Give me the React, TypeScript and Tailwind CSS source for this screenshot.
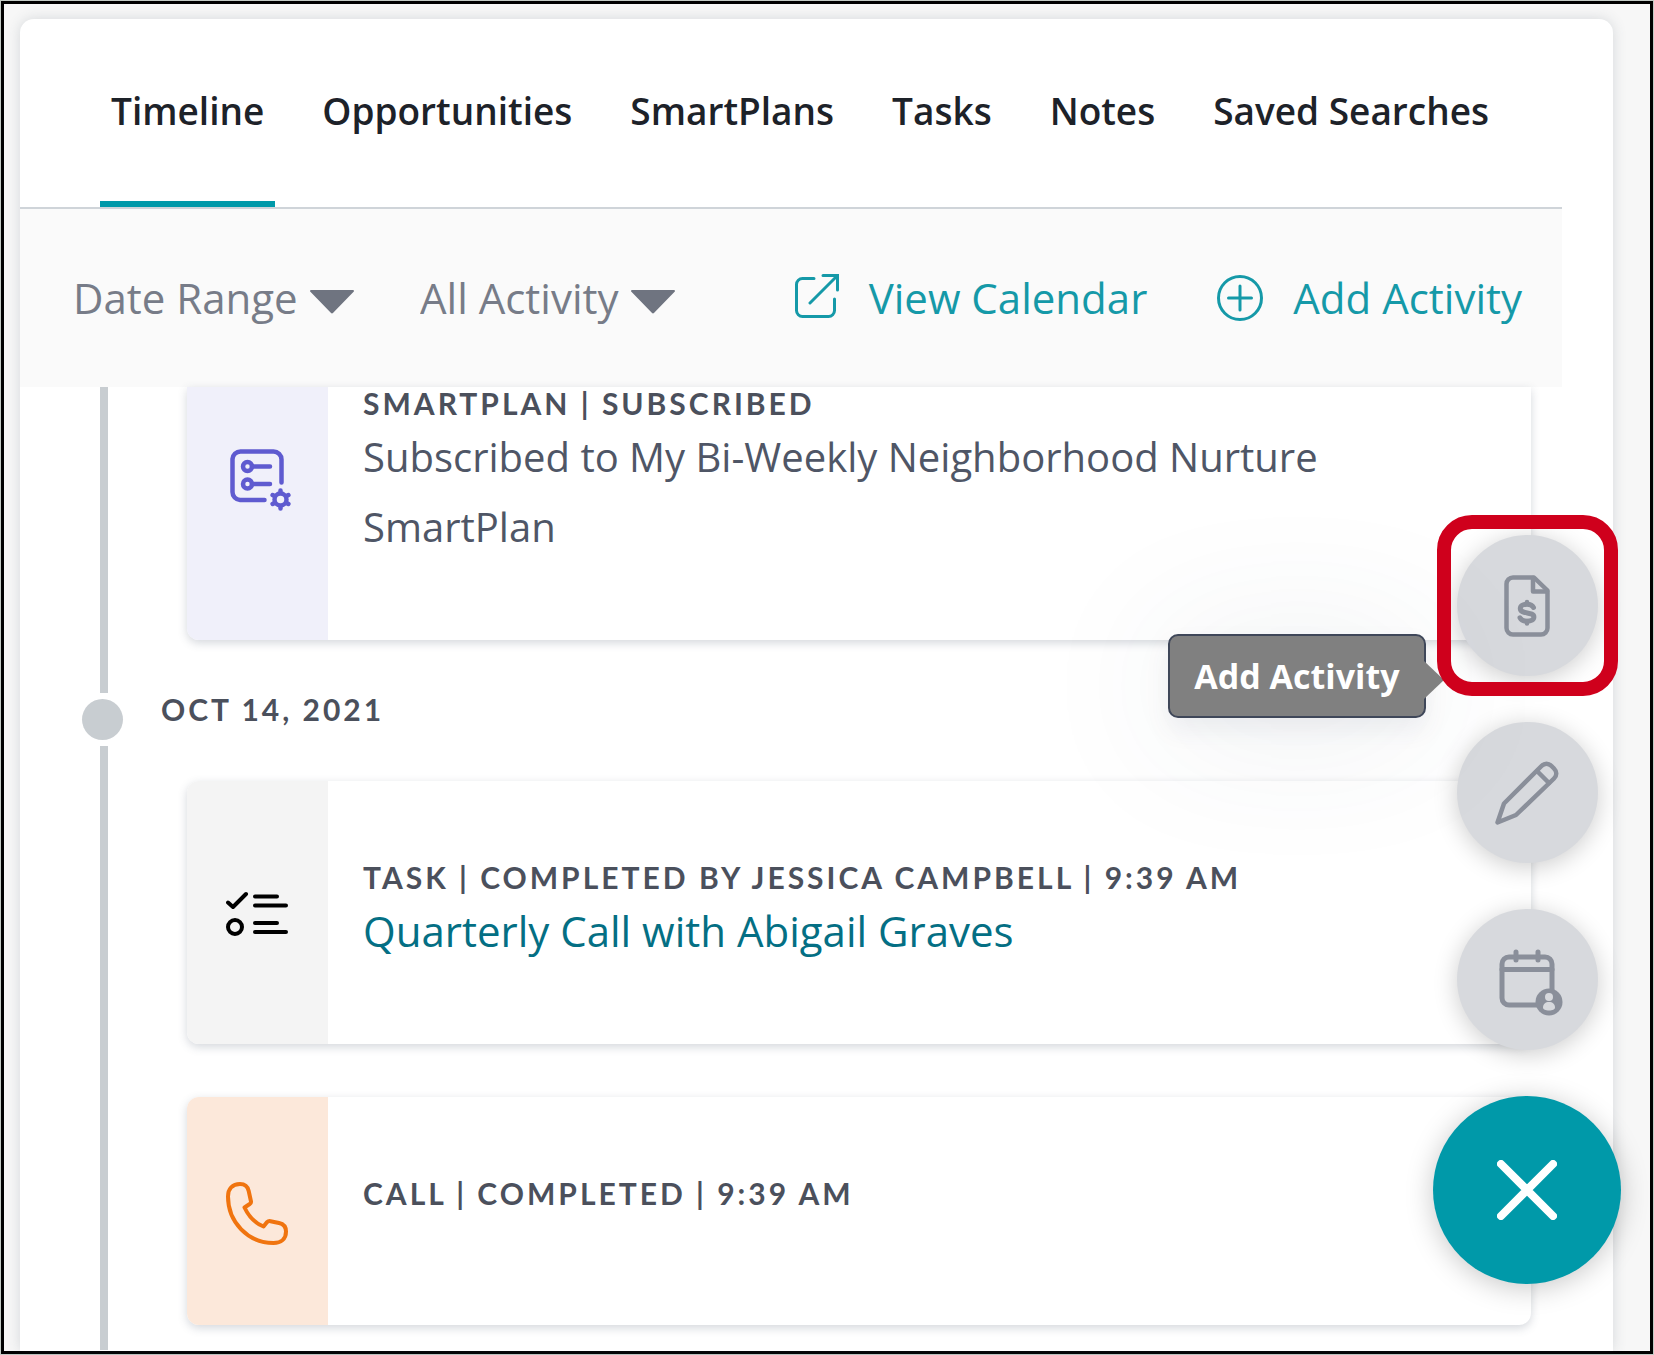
import type { ReactNode } from "react";

const tabs = ["Timeline", "Opportunities", "SmartPlans", "Tasks", "Notes", "Saved Searches"];

function Caret() {
  return (
    <svg viewBox="0 0 44 24" className="pointer-events-none mt-2 h-6 w-11 shrink-0 fill-[#6f7480]" aria-hidden="true">
      <path d="M1 0h42c1 0 1.300 1 .6 1.800L23.200 22.800a1.600 1.600 0 0 1-2.400 0L.4 1.800C-.3 1 0 0 1 0z" />
    </svg>
  );
}

function FilterSelect({ label }: { label: string }) {
  return (
    <label className="flex items-center gap-3">
      <select
        aria-label={label}
        className="cursor-pointer appearance-none bg-transparent text-[42px] leading-[56px] text-[#777c88] outline-none"
      >
        <option>{label}</option>
      </select>
      <Caret />
    </label>
  );
}

function ExternalIcon() {
  return (
    <svg viewBox="0 0 44 44" className="mb-1 h-11 w-11 shrink-0" fill="none" stroke="currentColor" strokeWidth="3" strokeLinecap="round" aria-hidden="true">
      <path d="M19 4.500H7.500a6 6 0 0 0-6 6v26a6 6 0 0 0 6 6h26a6 6 0 0 0 6-6V25" />
      <path d="M28 1.500h14.500V16M42 2 15 29" />
    </svg>
  );
}

function PlusCircleIcon() {
  return (
    <svg viewBox="0 0 46 46" className="h-[46px] w-[46px] shrink-0" fill="none" stroke="currentColor" strokeWidth="3" strokeLinecap="round" aria-hidden="true">
      <circle cx="23" cy="23" r="21.500" />
      <path d="M23 11v24M11.500 23h23" />
    </svg>
  );
}

function SmartPlanIcon() {
  return (
    <svg viewBox="-6 0 68 63" className="h-[63px] w-[68px]" fill="none" stroke="#5f5bd0" strokeWidth="4.500" strokeLinecap="round" aria-hidden="true">
      <path d="M34.500 51H10a8 8 0 0 1-7.500-8V10a8 8 0 0 1 8-7.500h33a8 8 0 0 1 8 8v23" />
      <circle cx="17.500" cy="17.500" r="4.500" />
      <circle cx="17.500" cy="35" r="4.500" />
      <path d="M22 17.500h18M22 35h18" />
      <circle cx="50.500" cy="50.500" r="6" />
      <path d="M50.500 43.500v-2M50.500 59.500v-2M56.600 47l1.800-1M42.600 55l1.800-1M56.600 54l1.800 1M42.600 46l1.800 1" />
    </svg>
  );
}

function TaskIcon() {
  return (
    <svg viewBox="0 -2 64 48" className="h-12 w-16" fill="none" stroke="#000" strokeWidth="4" strokeLinecap="round" strokeLinejoin="round" aria-hidden="true">
      <path d="M2 11.500l5 4.500L20 3" />
      <circle cx="9" cy="36" r="7" />
      <path d="M29 5.500h22M29 14.500h31M29 32h22M29 41h31" />
    </svg>
  );
}

function PhoneIcon() {
  return (
    <svg viewBox="0 -5 64 68" className="h-[68px] w-16" fill="none" stroke="#f0740f" strokeWidth="4" strokeLinejoin="round" aria-hidden="true">
      <path d="M25 19.500 22.700 9C21.700 4.400 18.500 2 14 2 6.500 2 2 7 2 14.500 2 40 22 61 47.500 61 55 61 60 57 60 49.500c0-4.500-2.500-7.500-7-8.500l-8.500-1.800c-1.500-.3-2.500 0-3.600 1l-3.400 4.300C30 41.500 22.500 34 18.500 25.500l5.200-3.500c1.200-.8 1.500-1.500 1.300-2.500z" />
    </svg>
  );
}

function FileDollarIcon() {
  return (
    <svg viewBox="0 0 46 62" className="h-[62px] w-[46px]" fill="none" stroke="#8a8f9a" strokeWidth="4.500" strokeLinecap="round" strokeLinejoin="round" aria-hidden="true">
      <path d="M30 2.500H9a6.500 6.500 0 0 0-6.500 6.500v44a6.500 6.500 0 0 0 6.500 6.500h28a6.500 6.500 0 0 0 6.500-6.500V15.500z" />
      <path d="M29 3V16.500h14" />
      <path d="M29.500 32.500c-1-2.200-3.500-3.200-6.500-3.200-4 0-6.700 1.600-6.700 4.300 0 6.200 13.600 2.500 13.600 8.400 0 2.600-2.800 4.200-6.900 4.200-3.600 0-6-1.200-7-3.400" strokeWidth="5" />
      <path d="M23 27v2M23 46v2.500" />
    </svg>
  );
}

function PencilIcon() {
  return (
    <svg viewBox="0 0 64 64" className="h-16 w-16" fill="none" stroke="#8a8f9a" strokeWidth="4.500" strokeLinecap="round" strokeLinejoin="round" aria-hidden="true">
      <path d="M2.500 61.500 9 42.500 46.500 5c3-3 7-3 10 0l2.500 2.500c3 3 3 7 0 10L21 54z" />
      <path d="M42 10l12 12" />
    </svg>
  );
}

function CalendarUserIcon() {
  return (
    <svg viewBox="-8 -7 72 75" className="h-[75px] w-[72px]" fill="none" stroke="#8a8f9a" strokeWidth="5" strokeLinecap="round" aria-hidden="true">
      <rect x="3" y="8" width="50" height="48" rx="7" />
      <path d="M3 20.500h50M17 3v8M39 3v8" />
      <circle cx="50" cy="53" r="13.500" fill="#8a8f9a" stroke="none" />
      <circle cx="50" cy="48" r="4" fill="#d7d9dd" stroke="none" />
      <path d="M44 58.500c0-3.500 2.500-5.500 6-5.500s6 2 6 5.500c0 2-2.500 3-6 3s-6-1-6-3z" fill="#d7d9dd" stroke="none" />
    </svg>
  );
}

function Label({ children }: { children: ReactNode }) {
  return <p className="font-['Lato',sans-serif] text-[30px] leading-8 font-bold tracking-widest text-[#4b505c]">{children}</p>;
}

function Card({ strip, icon, shape, children }: { strip: string; icon: ReactNode; shape: string; children: ReactNode }) {
  return (
    <article className={`flex bg-white shadow-[0_3px_10px_rgba(60,75,95,0.22)] ${shape}`}>
      <div className={`flex w-[141px] shrink-0 justify-center ${strip}`}>{icon}</div>
      <div className="flex-1 px-[35px]">{children}</div>
    </article>
  );
}

function ActionButton({ label, children }: { label: string; children: ReactNode }) {
  return (
    <button
      type="button"
      aria-label={label}
      className="flex h-[141px] w-[141px] cursor-pointer items-center justify-center rounded-full bg-[#d7d9dd] shadow-[0_4px_24px_rgba(0,0,0,0.2)]"
    >
      {children}
    </button>
  );
}

export default function App() {
  return (
    <div className="min-h-screen bg-[#c3cac5] p-px font-['Open_Sans',sans-serif]">
      <div className="relative flex min-h-[calc(100vh-2px)] flex-col border-[3px] border-black bg-[#f7f7f7] pt-[15px] pr-[37px] pl-4">
        <main className="flex-1 rounded-t-[14px] bg-white shadow-[0_0_14px_rgba(60,75,95,0.18)]">
          <nav className="mr-[51px] flex gap-9 border-b-2 border-[#cfd4d9] pl-20">
            {tabs.map((tab, i) => (
              <a
                key={tab}
                href="#"
                aria-current={i === 0 ? "page" : undefined}
                className={`border-b-[6px] px-[11px] pt-[68px] pb-[66px] text-[37px] leading-12 font-semibold whitespace-nowrap text-[#1d2229] ${
                  i === 0 ? "border-[#0099a9]" : "border-transparent"
                }`}
              >
                {tab}
              </a>
            ))}
          </nav>

          <div className="mr-[51px] flex h-[178px] items-center justify-between bg-[#fafafa] pr-10 pl-[53px]">
            <div className="flex gap-[66px]">
              <FilterSelect label="Date Range" />
              <FilterSelect label="All Activity" />
            </div>
            <div className="flex gap-[70px] text-[42px] leading-[56px] text-[#1599a8]">
              <a href="#" className="flex items-center gap-[30px]">
                <ExternalIcon />
                View Calendar
              </a>
              <button type="button" className="flex cursor-pointer items-center gap-[30px]">
                <PlusCircleIcon />
                Add Activity
              </button>
            </div>
          </div>

          <section className="flex pr-[82px] pl-20">
            <div className="w-2 shrink-0 bg-[#c8cdd1]" />
            <div className="flex-1 pb-[53px] pl-[79px]">
              <Card strip="rounded-bl-xl bg-[#f0f0fa] pt-[62px]" shape="rounded-b-xl" icon={<SmartPlanIcon />}>
                <Label>SMARTPLAN | SUBSCRIBED</Label>
                <p className="pt-[3px] pb-[78px] text-[40px] leading-[70px] text-[#4f5666]">
                  Subscribed to My Bi-Weekly Neighborhood Nurture SmartPlan
                </p>
              </Card>
            </div>
          </section>

          <div className="flex h-[53px] gap-[38px] pl-[62px]">
            <span className="mt-[6px] h-[41px] w-[41px] rounded-full bg-[#c8cdd1]" />
            <h2>
              <Label>OCT 14, 2021</Label>
            </h2>
          </div>

          <section className="flex pr-[82px] pl-20">
            <div className="w-2 shrink-0 bg-[#c8cdd1]" />
            <div className="flex flex-1 flex-col gap-[53px] pt-[35px] pb-[25px] pl-[79px]">
              <Card strip="items-center rounded-l-xl bg-[#f4f4f4]" shape="rounded-xl" icon={<TaskIcon />}>
                <div className="pt-20 pb-[78px]">
                  <Label>TASK | COMPLETED BY JESSICA CAMPBELL | 9:39 AM</Label>
                  <a href="#" className="block pt-[3px] text-[42px] leading-[70px] text-[#046f84]">
                    Quarterly Call with Abigail Graves
                  </a>
                </div>
              </Card>
              <Card strip="items-center rounded-l-xl bg-[#fce8da]" shape="rounded-xl" icon={<PhoneIcon />}>
                <div className="pt-20 pb-[116px]">
                  <Label>CALL | COMPLETED | 9:39 AM</Label>
                </div>
              </Card>
            </div>
          </section>
        </main>

        <div className="absolute top-[531px] right-[29px] flex flex-col items-center gap-[46px]">
          <div className="relative">
            <ActionButton label="Add transaction">
              <FileDollarIcon />
            </ActionButton>
            <div
              role="tooltip"
              className="absolute top-[99px] right-[172px] rounded-[10px] border-2 border-[#3f4759] bg-[#808080] px-6 py-[18px] text-[34px] leading-11 font-bold whitespace-nowrap text-white shadow-[0_12px_24px_rgba(60,80,100,0.08),0_10px_150px_rgba(60,80,100,0.1)]"
            >
              Add Activity
              <svg viewBox="0 0 20 38" className="absolute top-[25px] -right-5 h-[38px] w-5 fill-[#808080]" aria-hidden="true">
                <path d="M0 0 20 19 0 38z" />
              </svg>
            </div>
            <div className="pointer-events-none absolute -inset-5 rounded-[35px] border-[14px] border-[#cf001c]" />
          </div>
          <ActionButton label="Add note">
            <PencilIcon />
          </ActionButton>
          <ActionButton label="Add appointment">
            <CalendarUserIcon />
          </ActionButton>
          <button
            type="button"
            aria-label="Close"
            className="flex h-[188px] w-[188px] cursor-pointer items-center justify-center rounded-full bg-[#0099a9] shadow-[0_4px_28px_rgba(0,0,0,0.22)]"
          >
            <svg viewBox="0 0 60 60" className="h-15 w-15" fill="none" stroke="#fff" strokeWidth="8" strokeLinecap="round" aria-hidden="true">
              <path d="M4 4l52 52M56 4 4 56" />
            </svg>
          </button>
        </div>
      </div>
    </div>
  );
}
